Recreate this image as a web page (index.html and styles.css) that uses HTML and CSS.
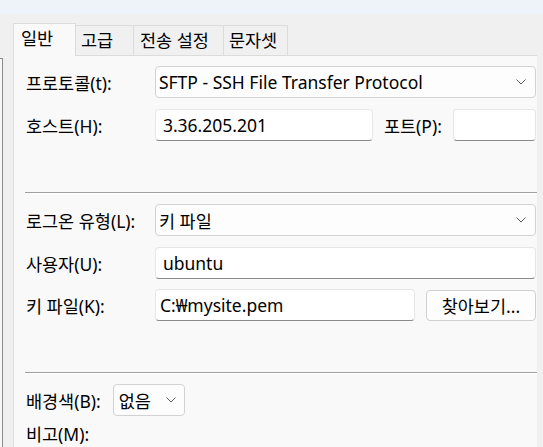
FILE: index.html
```html
<!DOCTYPE html>
<html lang="ko">
<head>
<meta charset="utf-8">
<link rel="stylesheet" href="styles.css">
</head>
<body>
<div class="topband"></div>
<div class="main">
  <div class="side"></div>
  <div class="tabwrap">
    <div class="tabbar">
      <div class="tab active">일반</div>
      <div class="tab">고급</div>
      <div class="tab">전송 설정</div>
      <div class="tab">문자셋</div>
    </div>
    <div class="panel">
      <div class="row">
        <div class="label">프로토콜(t):</div>
        <div class="select grow">
          <span>SFTP - SSH File Transfer Protocol</span>
          <svg class="chev" width="10" height="6" viewBox="0 0 10 6"><path d="M0.5 0.5 L5 5 L9.5 0.5" fill="none" stroke="#5f5f5f" stroke-width="1"/></svg>
        </div>
      </div>
      <div class="row">
        <div class="label">호스트(H):</div>
        <div class="input host">3.36.205.201</div>
        <div class="label port-label">포트(P):</div>
        <div class="input port"></div>
      </div>
      <div class="sep sep1"></div>
      <div class="row">
        <div class="label">로그온 유형(L):</div>
        <div class="select grow">
          <span>키 파일</span>
          <svg class="chev" width="10" height="6" viewBox="0 0 10 6"><path d="M0.5 0.5 L5 5 L9.5 0.5" fill="none" stroke="#5f5f5f" stroke-width="1"/></svg>
        </div>
      </div>
      <div class="row r2">
        <div class="label">사용자(U):</div>
        <div class="input grow">ubuntu</div>
      </div>
      <div class="row r2">
        <div class="label">키 파일(K):</div>
        <div class="input keyfile">C:₩mysite.pem</div>
        <div class="button">찾아보기...</div>
      </div>
      <div class="sep sep2"></div>
      <div class="row last">
        <div class="label short">배경색(B):</div>
        <div class="select small">
          <span>없음</span>
          <svg class="chev" width="10" height="6" viewBox="0 0 10 6"><path d="M0.5 0.5 L5 5 L9.5 0.5" fill="none" stroke="#5f5f5f" stroke-width="1"/></svg>
        </div>
      </div>
      <div class="label memo">비고(M):</div>
    </div>
  </div>
</div>
</body>
</html>
```

FILE: styles.css
```css
html, body {
  margin: 0;
  padding: 0;
  width: 543px;
  height: 447px;
  overflow: hidden;
  background: #f0f0f0;
  font-family: "Noto Sans", "Noto Sans CJK KR", sans-serif;
  font-size: 17.5px;
  color: #000;
}
.topband {
  height: 14px;
  background: #eef3f9;
}
.main {
  display: flex;
  height: 433px;
}
.side {
  width: 2px;
  margin-top: 44px;
  border-top: 1px solid #8c8c8c;
  border-right: 1px solid #8c8c8c;
  background: #f7f7f7;
}
.tabwrap {
  margin-left: 10px;
  padding-top: 9px;
  width: 560px;
}
.tabbar {
  display: flex;
  align-items: flex-end;
  height: 32px;
}
.tab {
  height: 30px;
  box-sizing: border-box;
  border: 1px solid #dcdcdc;
  border-bottom: none;
  margin-left: -1px;
  padding: 0 6px;
  display: flex;
  align-items: center;
  line-height: 1;
  font-size: 17.5px;
  background: #f0f0f0;
  white-space: nowrap;
}
.tab:nth-child(2) { width: 59px; padding-left: 5px; }
.tab:nth-child(3) { width: 91px; padding-left: 6px; }
.tab:nth-child(4) { width: 65px; padding-left: 5px; }
.tab.active {
  height: 33px;
  width: 63px;
  margin-left: 0;
  padding-left: 7px;
  padding-bottom: 2px;
  background: #f9f9f9;
  position: relative;
  z-index: 1;
  margin-bottom: -1px;
}
.panel {
  border-top: 1px solid #dcdcdc;
  border-left: 1px solid #dcdcdc;
  background: #f9f9f9;
  padding: 10px 0 0 12px;
  width: 511px;
  height: 400px;
}
.row {
  display: flex;
  align-items: center;
  height: 32px;
  margin-bottom: 11px;
}
.row.r2 { margin-bottom: 10px; }
.row.last { margin-bottom: 0; }
.label {
  width: 129px;
  flex: none;
  white-space: nowrap;
}
.label.short { width: auto; margin-right: 12px; }
.port-label { width: 59px; margin-left: 11px; margin-right: 10px; }
.select, .input, .button {
  box-sizing: border-box;
  height: 32px;
  border-radius: 4px;
  display: flex;
  align-items: center;
  white-space: nowrap;
}
.select {
  border: 1px solid #d2d2d2;
  background: #fdfdfd;
  padding: 0 9px 0 3px;
  justify-content: space-between;
}
.input {
  border: 1px solid #e6e6e6;
  border-bottom: 1px solid #8a8a8a;
  background: #fff;
  padding: 0 7px;
}
.grow { flex: 1; margin-right: 1px; }
.host { width: 218px; }
.port { width: 83px; }
.keyfile { width: 260px; padding-left: 4px; }
.button {
  width: 110px;
  height: 31px;
  margin-left: 11px;
  border: 1px solid #d0d0d0;
  background: #fdfdfd;
  justify-content: center;
}
.select.small { width: 72px; padding: 0 8px 0 5px; }
.sep {
  height: 1px;
  background: #a0a0a0;
  margin-right: 0;
  margin-left: -1px;
  border-bottom: 1px solid #fff;
}
.sep1 { margin-top: 51px; margin-bottom: 10px; }
.sep2 { margin-top: 51px; margin-bottom: 10px; }
.memo { margin-top: 8px; line-height: 20px; }
```
